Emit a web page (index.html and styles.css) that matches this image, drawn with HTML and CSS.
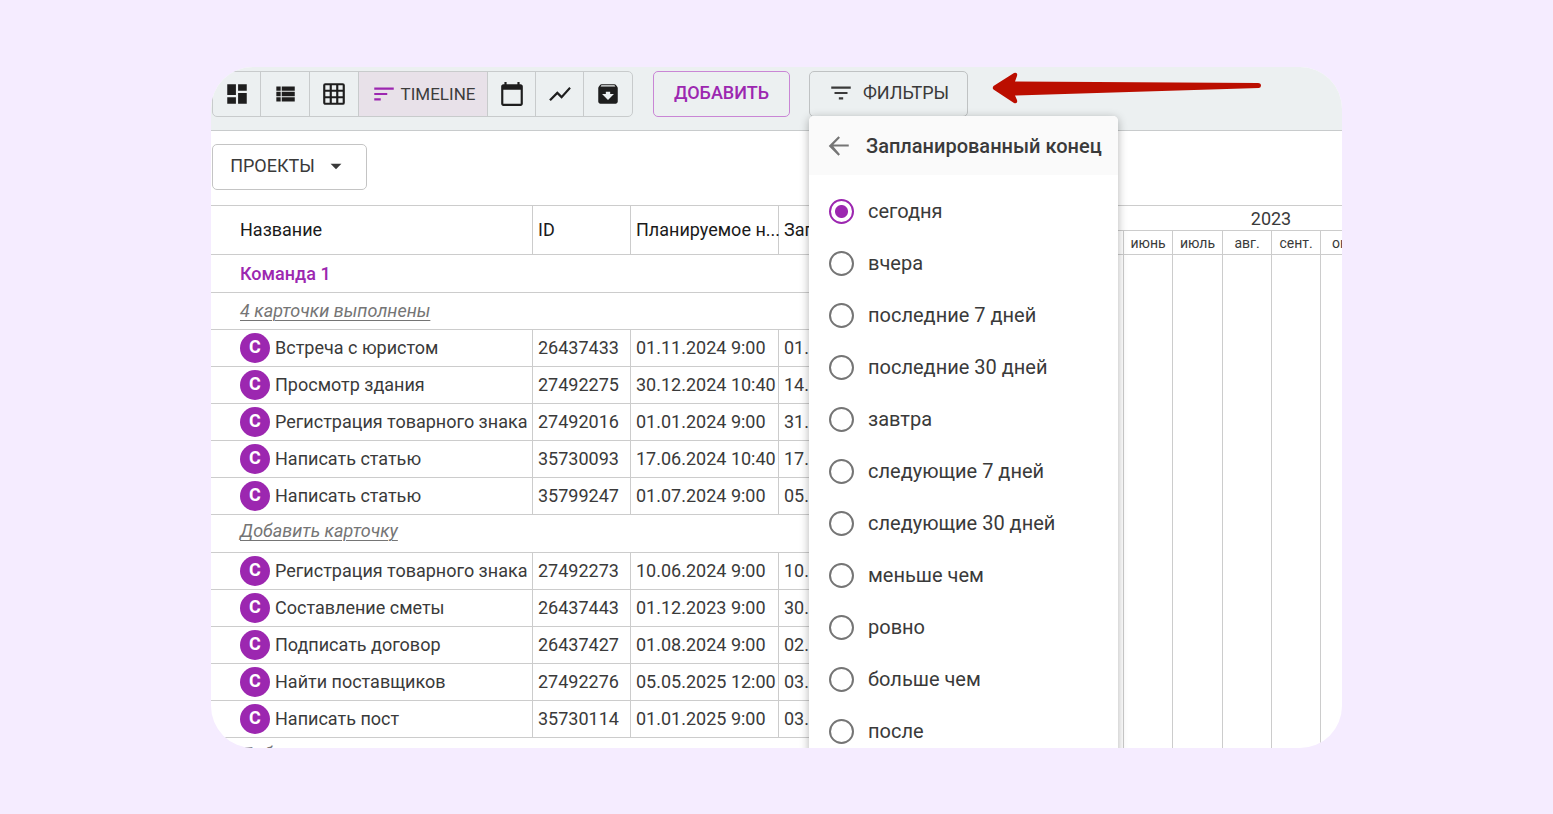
FILE: index.html
```html
<!DOCTYPE html>
<html lang="ru">
<head>
<meta charset="utf-8">
<title>Timeline</title>
<link rel="stylesheet" href="styles.css">
</head>
<body>
<main class="card">
  <header class="toolbar">
    <div class="views">
      <button class="view" type="button" aria-label="Доска"><svg class="icon" viewBox="0 0 24 24"><path d="M3 13h8V3H3v10zm0 8h8v-6H3v6zm10 0h8V11h-8v10zm0-18v6h8V3h-8z"/></svg></button>
      <button class="view" type="button" aria-label="Список"><svg class="icon" viewBox="0 0 24 24"><path d="M4 14h4v-4H4v4zm0 5h4v-4H4v4zM4 9h4V5H4v4zm5 5h12v-4H9v4zm0 5h12v-4H9v4zM9 5v4h12V5H9z"/></svg></button>
      <button class="view" type="button" aria-label="Таблица"><svg class="icon" viewBox="0 0 24 24"><path d="M10 4v4h4V4h-4m6 0v4h4V4h-4m0 6v4h4v-4h-4m0 6v4h4v-4h-4m-2 4v-4h-4v4h4m-6 0v-4H4v4h4m0-6v-4H4v4h4m0-6V4H4v4h4m2 6h4v-4h-4v4M4 2h16a2 2 0 0 1 2 2v16a2 2 0 0 1-2 2H4c-1.08 0-2-.9-2-2V4a2 2 0 0 1 2-2z"/></svg></button>
      <button class="view view-active" type="button"><svg class="icon icon-accent" viewBox="0 0 24 24"><path d="M3 18h6v-2H3v2zM3 6v2h18V6H3zm0 7h12v-2H3v2z"/></svg>TIMELINE</button>
      <button class="view" type="button" aria-label="Календарь"><svg class="icon" viewBox="0 0 24 24"><path d="M20 3h-1V1h-2v2H7V1H5v2H4c-1.1 0-2 .9-2 2v16c0 1.1.9 2 2 2h16c1.1 0 2-.9 2-2V5c0-1.1-.9-2-2-2zm0 18H4V8h16v13z"/></svg></button>
      <button class="view" type="button" aria-label="График"><svg class="icon" viewBox="0 0 24 24"><path d="M3.5 18.49l6-6.01 4 4L22 6.92l-1.41-1.41-7.09 7.97-4-4L2 16.99z"/></svg></button>
      <button class="view" type="button" aria-label="Архив"><svg class="icon" viewBox="0 0 24 24"><path d="M20.54 5.23l-1.39-1.68C18.88 3.21 18.47 3 18 3H6c-.47 0-.88.21-1.16.55L3.46 5.23C3.17 5.57 3 6.02 3 6.5V19c0 1.1.9 2 2 2h14c1.1 0 2-.9 2-2V6.5c0-.48-.17-.93-.46-1.27zM12 17.5L6.5 12H10v-2h4v2h3.5L12 17.5zM5.12 5l.81-1h12l.94 1H5.12z"/></svg></button>
    </div>
    <button class="button button-add" type="button">ДОБАВИТЬ</button>
    <div class="filter">
      <button class="button button-filter" type="button"><svg class="icon" viewBox="0 0 24 24"><path d="M10 18h4v-2h-4v2zM3 6v2h18V6H3zm3 7h12v-2H6v2z"/></svg>ФИЛЬТРЫ</button>
      <form class="menu">
        <div class="menu-head">
          <button class="back" type="button" aria-label="Назад"><svg class="icon" viewBox="0 0 24 24"><path d="M21 11H6.83l6.09-6.09L11.5 3.5 2.5 12.5l9 9 1.41-1.41L6.83 13H21v-2z" transform="translate(0 -.5)"/></svg></button>
          <h2 class="menu-title">Запланированный конец</h2>
        </div>
        <div class="options">
          <label class="option"><input class="radio" type="radio" name="end" checked>сегодня</label>
          <label class="option"><input class="radio" type="radio" name="end">вчера</label>
          <label class="option"><input class="radio" type="radio" name="end">последние 7 дней</label>
          <label class="option"><input class="radio" type="radio" name="end">последние 30 дней</label>
          <label class="option"><input class="radio" type="radio" name="end">завтра</label>
          <label class="option"><input class="radio" type="radio" name="end">следующие 7 дней</label>
          <label class="option"><input class="radio" type="radio" name="end">следующие 30 дней</label>
          <label class="option"><input class="radio" type="radio" name="end">меньше чем</label>
          <label class="option"><input class="radio" type="radio" name="end">ровно</label>
          <label class="option"><input class="radio" type="radio" name="end">больше чем</label>
          <label class="option"><input class="radio" type="radio" name="end">после</label>
        </div>
      </form>
    </div>
    <svg class="pointer" viewBox="0 0 270 34"><path d="M1.500 15 Q0 17 1.500 18.500 L22 32 Q26 33 25 29 L23 24.500 L267 17 Q269 16.500 269 14.500 Q269 12 266 12 L23 10.500 L25 5 Q26 1 22 2 Z"/></svg>
  </header>
  <div class="subbar">
    <button class="button button-projects" type="button">ПРОЕКТЫ<svg class="icon" viewBox="0 0 24 24"><path d="M7 10l5 5 5-5z"/></svg></button>
  </div>
  <div class="board">
    <table class="sheet">
      <colgroup><col class="col-name"><col class="col-id"><col class="col-start"><col></colgroup>
      <thead>
        <tr class="head"><th>Название</th><th>ID</th><th>Планируемое н...</th><th>Зап</th></tr>
      </thead>
      <tbody>
        <tr class="team"><td colspan="4">Команда 1</td></tr>
        <tr><td colspan="4"><a class="row-link" href="#">4 карточки выполнены</a></td></tr>
        <tr><td><span class="name"><span class="avatar">C</span>Встреча с юристом</span></td><td>26437433</td><td>01.11.2024 9:00</td><td>01.</td></tr>
        <tr><td><span class="name"><span class="avatar">C</span>Просмотр здания</span></td><td>27492275</td><td>30.12.2024 10:40</td><td>14.</td></tr>
        <tr><td><span class="name"><span class="avatar">C</span>Регистрация товарного знака</span></td><td>27492016</td><td>01.01.2024 9:00</td><td>31.</td></tr>
        <tr><td><span class="name"><span class="avatar">C</span>Написать статью</span></td><td>35730093</td><td>17.06.2024 10:40</td><td>17.</td></tr>
        <tr><td><span class="name"><span class="avatar">C</span>Написать статью</span></td><td>35799247</td><td>01.07.2024 9:00</td><td>05.</td></tr>
        <tr class="add"><td colspan="4"><a class="row-link" href="#">Добавить карточку</a></td></tr>
        <tr><td><span class="name"><span class="avatar">C</span>Регистрация товарного знака</span></td><td>27492273</td><td>10.06.2024 9:00</td><td>10.</td></tr>
        <tr><td><span class="name"><span class="avatar">C</span>Составление сметы</span></td><td>26437443</td><td>01.12.2023 9:00</td><td>30.</td></tr>
        <tr><td><span class="name"><span class="avatar">C</span>Подписать договор</span></td><td>26437427</td><td>01.08.2024 9:00</td><td>02.</td></tr>
        <tr><td><span class="name"><span class="avatar">C</span>Найти поставщиков</span></td><td>27492276</td><td>05.05.2025 12:00</td><td>03.</td></tr>
        <tr><td><span class="name"><span class="avatar">C</span>Написать пост</span></td><td>35730114</td><td>01.01.2025 9:00</td><td>03.</td></tr>
        <tr class="add"><td colspan="4"><a class="row-link" href="#">Добавить карточку</a></td></tr>
      </tbody>
    </table>
    <section class="timeline">
      <div class="year">2023</div>
      <div class="months"><span></span><span>июнь</span><span>июль</span><span>авг.</span><span>сент.</span><span>окт.</span><span></span><span></span></div>
      <div class="months lanes"><span></span><span></span><span></span><span></span><span></span><span></span><span></span><span></span></div>
    </section>
  </div>
</main>
</body>
</html>
```
FILE: styles.css
```css
* { box-sizing: border-box; }

body {
  margin: 0;
  min-height: 100vh;
  padding: 67px 211px 66px;
  background: #f5ecff;
  color: #3a3a3a;
  font: 18px/24px Roboto, "Liberation Sans", sans-serif;
}

button { font: inherit; color: inherit; cursor: pointer; }

.card {
  display: flex;
  flex-direction: column;
  height: calc(100vh - 133px);
  overflow: hidden;
  border-radius: 42px;
  background: #fff;
}

.icon { width: 26px; height: 26px; flex: none; fill: currentColor; }
.icon-accent { fill: #9c27b0; }

.toolbar {
  display: flex;
  align-items: flex-start;
  flex: none;
  height: 64px;
  padding: 4px 1px;
  border-bottom: 1px solid #c8cbcc;
  background: #ecf0f1;
}

.views {
  display: flex;
  height: 46px;
  border: 1px solid #c8cbcc;
  border-radius: 5px;
  overflow: hidden;
}

.view {
  display: flex;
  align-items: center;
  justify-content: center;
  gap: 4px;
  width: 49px;
  padding: 0;
  border: 0;
  border-right: 1px solid #c8cbcc;
  background: none;
  color: #1e1e1e;
  font-size: 17px;
}
.view:first-child, .view-active ~ .view { width: 48px; }
.view:last-child { border-right: 0; }
.view-active { width: 129px; background: #e8e1e9; color: #3c3c3c; }

.button {
  display: flex;
  align-items: center;
  justify-content: center;
  height: 46px;
  padding: 0 0 2px;
  border: 1px solid #bfc2c3;
  border-radius: 5px;
  background: none;
}
.button-add {
  width: 137px;
  margin: 0 19px 0 20px;
  border-color: #c986d5;
  color: #9c27b0;
  font-weight: 500;
}
.button-filter { gap: 9px; width: 159px; }
.button-projects { gap: 8px; width: 155px; border-color: #c4c4c4; }

.filter { position: relative; }

.menu {
  position: absolute;
  z-index: 2;
  top: 45px;
  left: 0;
  width: 309px;
  border-radius: 5px;
  overflow: hidden;
  background: #fff;
  box-shadow: 0 2px 10px rgba(0, 0, 0, .3);
}
.menu-head {
  display: flex;
  align-items: center;
  gap: 14px;
  height: 59px;
  padding: 0 17px;
  background: #fafafa;
}
.back { display: flex; padding: 0; border: 0; background: none; color: #757575; }
.menu-title { margin: 0; font-size: 20px; font-weight: 500; white-space: nowrap; }

.options { padding: 10px 0; }
.option {
  display: flex;
  align-items: center;
  gap: 14px;
  height: 52px;
  padding-left: 20px;
  font-size: 20px;
}
.radio {
  appearance: none;
  width: 25px;
  height: 25px;
  margin: 0;
  border: 2px solid #757575;
  border-radius: 50%;
}
.radio:checked {
  border-color: #9c27b0;
  background: radial-gradient(circle, #9c27b0 6px, transparent 7px);
}

.pointer { width: 270px; height: 34px; margin-left: 24px; fill: #bb0e00; }

.subbar { flex: none; height: 74px; padding: 13px 1px; }

.board { display: flex; flex: 1; min-height: 0; overflow: hidden; border-top: 1px solid #ccc; }

.sheet {
  flex: none;
  align-self: flex-start;
  width: 863px;
  table-layout: fixed;
  border-collapse: separate;
  border-spacing: 0;
}
.col-name { width: 322px; }
.col-id { width: 98px; }
.col-start { width: 148px; }
.sheet th, .sheet td {
  height: 37px;
  padding: 0 0 0 5px;
  border-right: 1px solid #ccc;
  border-bottom: 1px solid #ccc;
  text-align: left;
  white-space: nowrap;
}
.sheet th:first-child, .sheet td:first-child { padding-left: 29px; }
.head th { height: 49px; color: #1a1a1a; font-weight: 400; }
.sheet .team td { height: 38px; color: #9c27b0; font-weight: 500; }
.sheet .add td { height: 38px; padding-top: 4px; vertical-align: top; }
.row-link { color: #757575; font-style: italic; text-underline-offset: 3px; text-decoration-thickness: 1px; }

.name { display: flex; align-items: center; gap: 5px; }
.avatar {
  width: 30px;
  height: 30px;
  border-radius: 50%;
  background: #9c27b0;
  color: #fff;
  font-weight: 700;
  line-height: 28px;
  text-align: center;
}

.timeline { display: flex; flex-direction: column; flex: 1; min-width: 0; overflow: hidden; }
.year { width: 394px; height: 25px; border-bottom: 1px solid #ccc; line-height: 26px; text-align: center; }
.months {
  display: grid;
  grid-template-columns: 50px 49px 50px repeat(5, 49px);
  width: 394px;
  height: 24px;
  border-bottom: 1px solid #ccc;
  font-size: 14px;
  text-align: center;
}
.months span { border-right: 1px solid #ccc; }
.lanes { flex: 1; border-bottom: 0; }
```
